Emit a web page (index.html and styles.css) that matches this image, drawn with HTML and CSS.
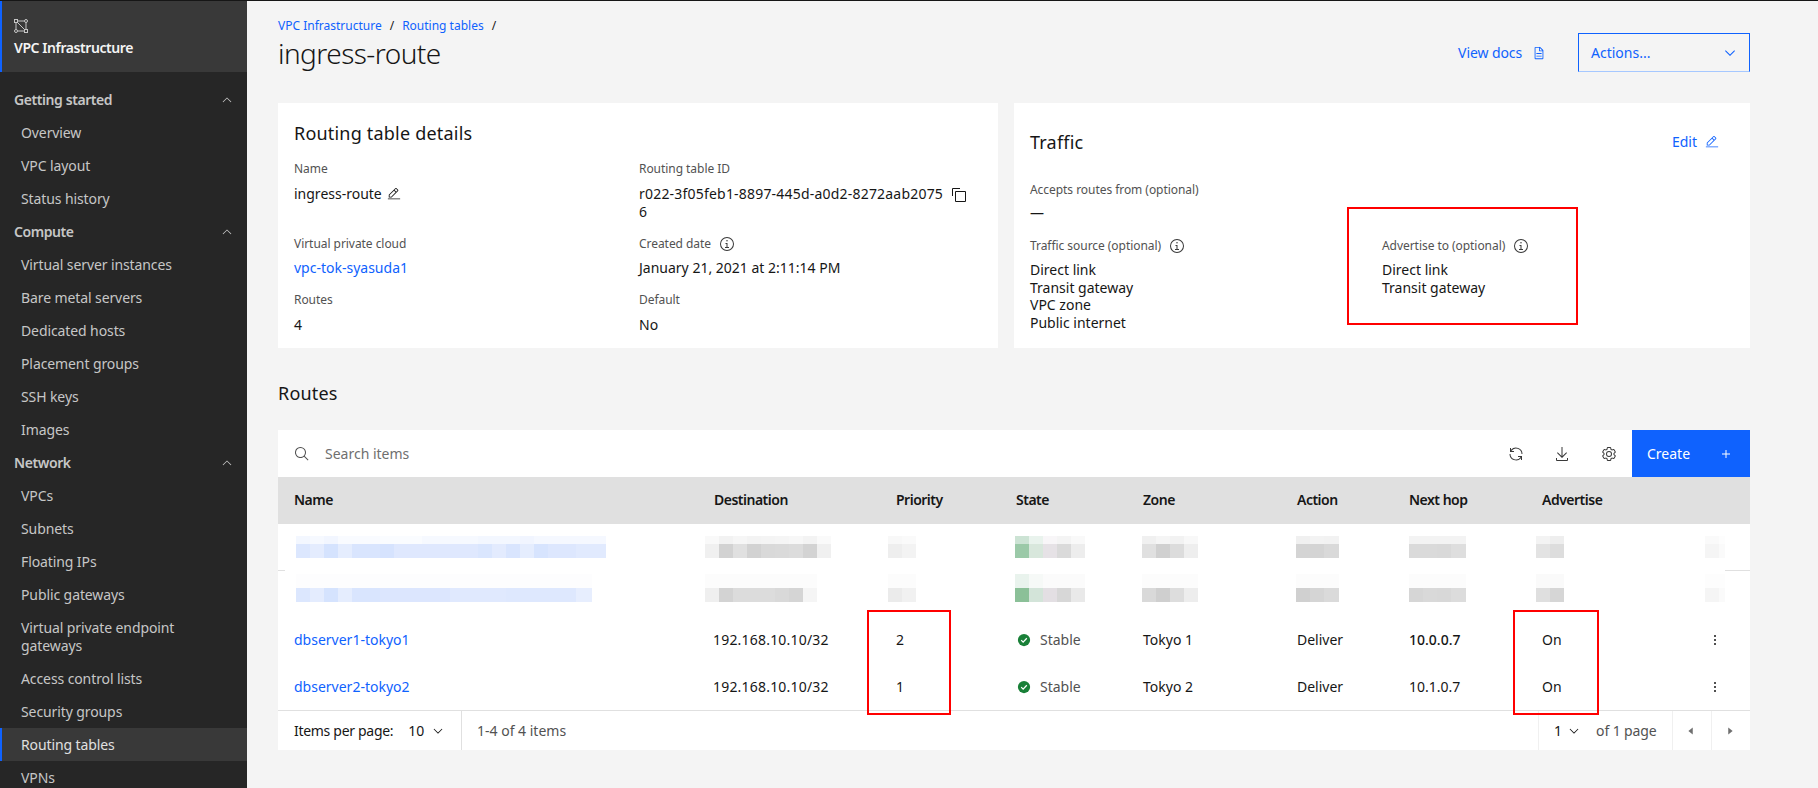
FILE: index.html
```html
<!DOCTYPE html>
<html lang="en">
<head>
<meta charset="utf-8">
<title>ingress-route</title>
<link rel="stylesheet" href="styles.css">
</head>
<body>
<svg class="defs" width="0" height="0" aria-hidden="true">
  <symbol id="i-down" viewBox="0 0 32 32"><path d="M16 22L6 12l1.4-1.4 8.6 8.6 8.6-8.6L26 12z"/></symbol>
  <symbol id="i-up" viewBox="0 0 32 32"><path d="M16 10l10 10-1.4 1.4L16 12.8l-8.6 8.6L6 20z"/></symbol>
  <symbol id="i-search" viewBox="0 0 32 32"><path d="M29 27.586l-7.552-7.552a11.018 11.018 0 1 0-1.414 1.414L27.586 29zM4 13a9 9 0 1 1 9 9 9.01 9.01 0 0 1-9-9z"/></symbol>
  <symbol id="i-edit" viewBox="0 0 32 32"><path d="M2 26h28v2H2zM25.4 9c.8-.8.8-2 0-2.8l-3.6-3.6c-.8-.8-2-.8-2.8 0l-15 15V24h6.4l15-15zm-5-5L24 7.6l-3 3L17.4 7l3-3zM6 22v-3.6l10-10l3.6 3.6l-10 10H6z"/></symbol>
  <symbol id="i-info" viewBox="0 0 32 32"><path d="M17 22v-8h-4v2h2v6h-3v2h8v-2zM16 8a1.5 1.5 0 1 0 1.5 1.5A1.5 1.5 0 0 0 16 8z"/><path d="M16 30a14 14 0 1 1 14-14 14 14 0 0 1-14 14zm0-26a12 12 0 1 0 12 12A12 12 0 0 0 16 4z"/></symbol>
  <symbol id="i-copy" viewBox="0 0 32 32"><path d="M28 10v18H10V10h18m0-2H10a2 2 0 0 0-2 2v18a2 2 0 0 0 2 2h18a2 2 0 0 0 2-2V10a2 2 0 0 0-2-2z"/><path d="M4 18H2V4a2 2 0 0 1 2-2h14v2H4z"/></symbol>
  <symbol id="i-download" viewBox="0 0 32 32"><path d="M26 24v4H6v-4H4v4a2 2 0 0 0 2 2h20a2 2 0 0 0 2-2v-4zM26 14l-1.41-1.41L17 20.17V2h-2v18.17l-7.59-7.58L6 14l10 10 10-10z"/></symbol>
  <symbol id="i-gear" viewBox="0 0 32 32"><path d="M27 16.76V16v-.77l1.92-1.68A2 2 0 0 0 29.3 11l-2.36-4a2 2 0 0 0-1.73-1 2 2 0 0 0-.64.1l-2.43.82a11.35 11.35 0 0 0-1.31-.75l-.51-2.52a2 2 0 0 0-2-1.61h-4.68a2 2 0 0 0-2 1.61l-.51 2.52a11.48 11.48 0 0 0-1.32.75l-2.38-.86A2 2 0 0 0 6.79 6a2 2 0 0 0-1.73 1L2.7 11a2 2 0 0 0 .41 2.51L5 15.24v1.53l-1.89 1.68A2 2 0 0 0 2.7 21l2.36 4a2 2 0 0 0 1.73 1 2 2 0 0 0 .64-.1l2.43-.82a11.35 11.35 0 0 0 1.31.75l.51 2.52a2 2 0 0 0 2 1.61h4.72a2 2 0 0 0 2-1.61l.51-2.52a11.48 11.48 0 0 0 1.32-.75l2.42.82a2 2 0 0 0 .64.1 2 2 0 0 0 1.73-1l2.28-4a2 2 0 0 0-.41-2.51zM25.21 24l-3.43-1.16a8.86 8.86 0 0 1-2.71 1.57L18.36 28h-4.72l-.71-3.55a9.36 9.36 0 0 1-2.7-1.57L6.79 24l-2.36-4 2.72-2.4a8.9 8.9 0 0 1 0-3.13L4.43 12l2.36-4 3.43 1.16a8.86 8.86 0 0 1 2.71-1.57L13.64 4h4.72l.71 3.55a9.36 9.36 0 0 1 2.7 1.57L25.21 8l2.36 4-2.72 2.4a8.9 8.9 0 0 1 0 3.13L27.57 20z"/><path d="M16 22a6 6 0 1 1 6-6 5.94 5.94 0 0 1-6 6zm0-10a3.91 3.91 0 0 0-4 4 3.91 3.91 0 0 0 4 4 3.91 3.91 0 0 0 4-4 3.91 3.91 0 0 0-4-4z"/></symbol>
  <symbol id="i-renew" viewBox="0 0 32 32"><path d="M12 10H6.78A11 11 0 0 1 27 16h2A13 13 0 0 0 6 7.68V4H4v8h8zM20 22h5.22A11 11 0 0 1 5 16H3a13 13 0 0 0 23 8.32V28h2v-8h-8z"/></symbol>
  <symbol id="i-add" viewBox="0 0 32 32"><path d="M17 15V8h-2v7H8v2h7v7h2v-7h7v-2h-7z"/></symbol>
  <symbol id="i-kebab" viewBox="0 0 32 32"><circle cx="16" cy="8" r="2"/><circle cx="16" cy="16" r="2"/><circle cx="16" cy="24" r="2"/></symbol>
  <symbol id="i-doc" viewBox="0 0 32 32"><path d="M25.7 9.3l-7-7A.908.908 0 0 0 18 2H8a2.006 2.006 0 0 0-2 2v24a2.006 2.006 0 0 0 2 2h16a2.006 2.006 0 0 0 2-2V10a.908.908 0 0 0-.3-.7zM18 4.4l5.6 5.6H18zM24 28H8V4h8v6a2.006 2.006 0 0 0 2 2h6z"/><path d="M10 22h12v2H10zM10 16h12v2H10z"/></symbol>
  <symbol id="i-left" viewBox="0 0 32 32"><path d="M20 24l-10-8 10-8z"/></symbol>
  <symbol id="i-right" viewBox="0 0 32 32"><path d="M12 8l10 8-10 8z"/></symbol>
</svg>

<div class="app">
  <nav class="side">
    <div class="side-head">
      <svg class="vpc-icon" viewBox="0 0 14 14" fill="none" stroke="currentColor" stroke-width="1">
        <rect x="0.5" y="0.5" width="3" height="3"/>
        <circle cx="12" cy="2" r="1.5"/>
        <circle cx="2" cy="12" r="1.5"/>
        <rect x="10.5" y="10.5" width="3" height="3"/>
        <path d="M3.5 2h7M2 3.5v7M3.5 12h7M12 3.5v7M3.5 3.5l7 7"/>
      </svg>
      <div class="side-title">VPC Infrastructure</div>
    </div>
    <div class="nav">
      <div class="nav-group">Getting started<svg class="ic nav-chev"><use href="#i-up"/></svg></div>
      <a class="nav-item">Overview</a>
      <a class="nav-item">VPC layout</a>
      <a class="nav-item">Status history</a>
      <div class="nav-group">Compute<svg class="ic nav-chev"><use href="#i-up"/></svg></div>
      <a class="nav-item">Virtual server instances</a>
      <a class="nav-item">Bare metal servers</a>
      <a class="nav-item">Dedicated hosts</a>
      <a class="nav-item">Placement groups</a>
      <a class="nav-item">SSH keys</a>
      <a class="nav-item">Images</a>
      <div class="nav-group">Network<svg class="ic nav-chev"><use href="#i-up"/></svg></div>
      <a class="nav-item">VPCs</a>
      <a class="nav-item">Subnets</a>
      <a class="nav-item">Floating IPs</a>
      <a class="nav-item">Public gateways</a>
      <a class="nav-item">Virtual private endpoint<br>gateways</a>
      <a class="nav-item">Access control lists</a>
      <a class="nav-item">Security groups</a>
      <a class="nav-item is-active">Routing tables</a>
      <a class="nav-item">VPNs</a>
    </div>
  </nav>

  <main class="main">
    <header class="page-head">
      <div class="page-titles">
        <div class="crumbs"><a class="link">VPC Infrastructure</a><span class="sep">/</span><a class="link">Routing tables</a><span class="sep">/</span></div>
        <h1 class="page-title">ingress-route</h1>
      </div>
      <div class="page-actions">
        <a class="link docs">View docs<svg class="ic"><use href="#i-doc"/></svg></a>
        <div class="actions-select">Actions...<svg class="ic"><use href="#i-down"/></svg></div>
      </div>
    </header>

    <section class="cards">
      <div class="card details">
        <h2 class="card-title">Routing table details</h2>
        <div class="details-grid">
          <div class="field">
            <div class="label">Name</div>
            <div class="value">ingress-route<svg class="ic ic-after"><use href="#i-edit"/></svg></div>
          </div>
          <div class="field">
            <div class="label">Routing table ID</div>
            <div class="value id-value"><span>r022-3f05feb1-8897-445d-a0d2-8272aab2075<br>6</span><svg class="ic copy"><use href="#i-copy"/></svg></div>
          </div>
          <div class="field">
            <div class="label">Virtual private cloud</div>
            <div class="value"><a class="link">vpc-tok-syasuda1</a></div>
          </div>
          <div class="field">
            <div class="label">Created date<svg class="ic ic-label"><use href="#i-info"/></svg></div>
            <div class="value">January 21, 2021 at 2:11:14 PM</div>
          </div>
          <div class="field">
            <div class="label">Routes</div>
            <div class="value">4</div>
          </div>
          <div class="field">
            <div class="label">Default</div>
            <div class="value">No</div>
          </div>
        </div>
      </div>

      <div class="card traffic">
        <div class="traffic-head">
          <h2 class="card-title">Traffic</h2>
          <a class="link edit">Edit<svg class="ic"><use href="#i-edit"/></svg></a>
        </div>
        <div class="field accepts">
          <div class="label">Accepts routes from (optional)</div>
          <div class="value">—</div>
        </div>
        <div class="traffic-grid">
          <div class="field">
            <div class="label">Traffic source (optional)<svg class="ic ic-label"><use href="#i-info"/></svg></div>
            <div class="value list">Direct link<br>Transit gateway<br>VPC zone<br>Public internet</div>
          </div>
          <div class="field">
            <div class="label">Advertise to (optional)<svg class="ic ic-label"><use href="#i-info"/></svg></div>
            <div class="value list">Direct link<br>Transit gateway</div>
          </div>
        </div>
        <div class="mark mark-advertise"></div>
      </div>
    </section>

    <h2 class="section-title">Routes</h2>

    <section class="table">
      <div class="toolbar">
        <svg class="ic search-ic"><use href="#i-search"/></svg>
        <span class="search-text">Search items</span>
        <span class="tool"><svg class="ic"><use href="#i-renew"/></svg></span>
        <span class="tool"><svg class="ic"><use href="#i-download"/></svg></span>
        <span class="tool"><svg class="ic"><use href="#i-gear"/></svg></span>
        <span class="create">Create<svg class="ic"><use href="#i-add"/></svg></span>
      </div>

      <div class="row row-head">
        <div>Name</div><div>Destination</div><div>Priority</div><div>State</div><div>Zone</div><div>Action</div><div>Next hop</div><div>Advertise</div><div></div>
      </div>

      <div class="row row-blur row-blur-1">
        <div><i class="mos m-name-1"></i></div>
        <div><i class="mos m-dest-1"></i></div>
        <div><i class="mos m-prio-1"></i></div>
        <div><i class="mos m-state-1"></i></div>
        <div><i class="mos m-zone-1"></i></div>
        <div><i class="mos m-act-1"></i></div>
        <div><i class="mos m-hop-1"></i></div>
        <div><i class="mos m-adv-1"></i></div>
        <div><i class="mos m-keb-1"></i></div>
      </div>
      <div class="row row-blur row-blur-2">
        <div><i class="mos m-name-2"></i></div>
        <div><i class="mos m-dest-2"></i></div>
        <div><i class="mos m-prio-2"></i></div>
        <div><i class="mos m-state-2"></i></div>
        <div><i class="mos m-zone-2"></i></div>
        <div><i class="mos m-act-2"></i></div>
        <div><i class="mos m-hop-2"></i></div>
        <div><i class="mos m-adv-2"></i></div>
        <div><i class="mos m-keb-2"></i></div>
      </div>

      <div class="row">
        <div><a class="link">dbserver1-tokyo1</a></div>
        <div class="num">192.168.10.10/32</div>
        <div>2</div>
        <div class="state"><svg class="ok" viewBox="0 0 16 16"><circle cx="8" cy="8" r="7"/><path d="M4.8 8.2l2.2 2.2 4.2-4.4"/></svg>Stable</div>
        <div>Tokyo 1</div>
        <div>Deliver</div>
        <div class="strong">10.0.0.7</div>
        <div>On</div>
        <div class="kebab"><svg class="ic"><use href="#i-kebab"/></svg></div>
      </div>
      <div class="row">
        <div><a class="link">dbserver2-tokyo2</a></div>
        <div class="num">192.168.10.10/32</div>
        <div>1</div>
        <div class="state"><svg class="ok" viewBox="0 0 16 16"><circle cx="8" cy="8" r="7"/><path d="M4.8 8.2l2.2 2.2 4.2-4.4"/></svg>Stable</div>
        <div>Tokyo 2</div>
        <div>Deliver</div>
        <div>10.1.0.7</div>
        <div>On</div>
        <div class="kebab"><svg class="ic"><use href="#i-kebab"/></svg></div>
      </div>

      <footer class="pager">
        <div class="pager-size"><span class="pager-label">Items per page:</span><span class="pager-num">10</span><svg class="ic"><use href="#i-down"/></svg></div>
        <div class="pager-count">1-4 of 4 items</div>
        <div class="pager-page"><span>1</span><svg class="ic"><use href="#i-down"/></svg><span class="pager-of">of 1 page</span></div>
        <div class="pager-btn"><svg class="ic"><use href="#i-left"/></svg></div>
        <div class="pager-btn"><svg class="ic"><use href="#i-right"/></svg></div>
      </footer>

      <div class="mark mark-priority"></div>
      <div class="mark mark-on"></div>
    </section>
  </main>
</div>
</body>
</html>
```
FILE: styles.css
```css
* { box-sizing: border-box; }
html, body { margin: 0; padding: 0; height: 100%; overflow: hidden; }
body {
  font-family: "Noto Sans", "Liberation Sans", sans-serif;
  font-size: 14px;
  line-height: 18px;
  color: #161616;
  background: #f4f4f4;
}
.defs { position: absolute; }
h1, h2 { margin: 0; font-weight: 400; }
a { text-decoration: none; }
.link { color: #0f62fe; }
.ic { width: 16px; height: 16px; fill: currentColor; flex: none; }

.app { display: flex; height: 788px; border-top: 1px solid #161616; }

/* Sidebar */
.side { width: 247px; flex: none; background: #262626; color: #c6c6c6; overflow: hidden; }
.side-head {
  height: 71px;
  padding: 18px 12px 0;
  background: #393939;
  border-left: 2px solid #0f62fe;
  color: #f4f4f4;
}
.vpc-icon { display: block; width: 14px; height: 14px; color: #c6c6c6; }
.side-title { margin-top: 6px; font-weight: 600; letter-spacing: -0.42px; }
.nav { padding-top: 11px; }
.nav-group {
  display: flex;
  align-items: center;
  justify-content: space-between;
  height: 33px;
  padding: 0 13px 0 14px;
  font-weight: 600;
  letter-spacing: -0.42px;
}
.nav-chev { width: 14px; height: 14px; }
.nav-item { display: block; padding: 7.5px 21px; letter-spacing: -0.1px; }
.nav-item.is-active {
  background: #393939;
  box-shadow: inset 2px 0 0 #0f62fe;
  color: #e0e0e0;
}

/* Main */
.main { flex: 1; min-width: 0; padding: 0 68px 0 31px; position: relative; }
.page-head { display: flex; justify-content: space-between; align-items: flex-start; height: 102px; }
.page-titles { padding-top: 17px; }
.crumbs { font-size: 12px; line-height: 16px; display: flex; }
.sep { margin: 0 8px; color: #161616; }
.page-title { font-size: 28px; line-height: 36px; font-weight: 300; margin-top: 1px; letter-spacing: -0.55px; }
.page-actions { display: flex; align-items: center; margin-top: 32px; }
.docs { display: flex; align-items: center; gap: 10px; margin-right: 32px; letter-spacing: -0.1px; }
.docs .ic { width: 14px; height: 16px; }
.actions-select {
  width: 172px;
  height: 39px;
  display: flex;
  align-items: center;
  justify-content: space-between;
  padding: 0 11px 0 12px;
  border: 1px solid #0f62fe;
  border-bottom-color: #a6c8ff;
  color: #0f62fe;
}

/* Cards */
.cards { display: grid; grid-template-columns: 720px 736px; gap: 16px; }
.card { background: #fff; position: relative; }
.card-title { font-size: 18px; line-height: 24px; letter-spacing: 0.2px; }
.details { height: 245px; padding: 18px 16px 0; }
.details-grid { display: grid; grid-template-columns: 345px 1fr; row-gap: 15px; margin-top: 16px; }
.label { font-size: 12px; line-height: 16px; color: #525252; display: flex; align-items: center; letter-spacing: -0.05px; }
.value { margin-top: 7.5px; display: flex; align-items: center; }
.ic-after { margin-left: 5px; width: 14px; height: 14px; }
.ic-label { margin-left: 8px; color: #393939; }
.id-value { align-items: flex-start; letter-spacing: 0.2px; }
.copy { margin-left: 8px; margin-top: 2px; }

.traffic { height: 245px; padding: 27px 31px 0 16px; }
.traffic-head { display: flex; justify-content: space-between; align-items: center; }
.edit { display: flex; align-items: center; gap: 8px; }
.edit .ic { width: 14px; height: 14px; }
.accepts { margin-top: 28px; }
.accepts .value { margin-top: 6px; }
.traffic-grid { display: grid; grid-template-columns: 352px 1fr; margin-top: 16px; }
.list { display: block; line-height: 17.5px; margin-top: 7px; }

.mark { position: absolute; border: 2px solid #f00; pointer-events: none; }
.mark-advertise { left: 333px; top: 104px; width: 231px; height: 118px; }
.mark-priority { left: 589px; top: 180px; width: 84px; height: 105px; }
.mark-on { left: 1235px; top: 180px; width: 86px; height: 105px; }

.section-title { font-size: 18px; line-height: 24px; margin: 33px 0 25px; letter-spacing: 0.2px; }

/* Table */
.table { position: relative; background: #fff; }
.toolbar { display: flex; align-items: center; height: 47px; padding-left: 16px; }
.search-ic { color: #525252; }
.search-text { flex: 1; margin-left: 15px; color: #6f6f6f; }
.tool { width: 46.5px; display: flex; justify-content: center; color: #393939; }
.create {
  width: 118px;
  height: 47px;
  padding: 0 16px 0 15px;
  display: flex;
  align-items: center;
  justify-content: space-between;
  background: #0f62fe;
  color: #fff;
}
.row {
  display: grid;
  grid-template-columns: 436px 182px 120px 127px 154px 112px 133px 150px 58px;
  align-items: center;
  height: 46.5px;
}
.row > :first-child { padding-left: 16px; }
.row-head { height: 47px; padding-bottom: 2px; background: #e0e0e0; font-weight: 600; letter-spacing: -0.5px; }
.num { letter-spacing: 0.2px; margin-left: -1px; }
.state { display: flex; align-items: center; gap: 9px; margin-left: 1px; color: #525252; }
.ok { width: 14px; height: 14px; }
.ok circle { fill: #198038; }
.ok path { fill: none; stroke: #fff; stroke-width: 1.4; }
.strong { font-weight: 500; }
.kebab { padding-left: 15px; display: flex; }

.row-blur { align-items: start; position: relative; }
.row-blur-1 { padding-top: 12px; }
.row-blur-2 { padding-top: 3px; }
.row-blur-1::before, .row-blur-1::after {
  content: "";
  position: absolute;
  bottom: 0;
  height: 1px;
  background: #e0e0e0;
}
.row-blur-1::before { left: 0; width: 7px; }
.row-blur-1::after { right: 0; width: 25px; }

.mos {
  display: block;
  background-repeat: no-repeat;
  background-position: 0 0, 0 100%;
}
.row-blur-1 .mos { height: 22px; background-size: 100% 8px, 100% 14px; }
.row-blur-2 .mos { height: 28px; background-size: 100% 14px, 100% 14px; }

.m-name-1 {
  width: 310px; margin-left: 2px;
  background-image:
    linear-gradient(90deg, #f3f7ff 0 14px, #f6f9ff 14px 28px, #f2f6ff 28px 42px, #f9fbff 42px 84px, #fafcff 84px 126px, #f6f9ff 126px 182px, #f3f7ff 182px 224px, #f1f5ff 224px 238px, #f5f8ff 238px 310px),
    linear-gradient(90deg, #dce7fe 0 14px, #e4ecfe 14px 28px, #d5e3fe 28px 42px, #e5edfe 42px 56px, #d9e5fe 56px 84px, #d6e3fe 84px 98px, #dfe8fe 98px 182px, #dae6fe 182px 196px, #e3ebfe 196px 210px, #d9e5fe 210px 224px, #e5edfe 224px 238px, #d7e4fe 238px 252px, #dde7fe 252px 280px, #e1eafe 280px 310px);
}
.m-name-2 {
  width: 296px; margin-left: 2px;
  background-image:
    linear-gradient(90deg, #fdfdfe 0 296px),
    linear-gradient(90deg, #dce7fe 0 14px, #e4ecfe 14px 28px, #d5e3fe 28px 42px, #e5edfe 42px 56px, #d9e5fe 56px 84px, #dce6fe 84px 154px, #e0e9fe 154px 210px, #dee8fe 210px 280px, #e7eefe 280px 296px);
}
.m-dest-1 {
  width: 126px; margin-left: -9px;
  background-image:
    linear-gradient(90deg, #f9f9f9 0 14px, #f2f2f2 14px 28px, #f6f6f6 28px 42px, #f3f3f3 42px 56px, #f4f4f4 56px 70px, #f5f5f5 70px 84px, #f7f7f7 84px 98px, #f3f3f3 98px 112px, #fafafa 112px 126px),
    linear-gradient(90deg, #f0f0f0 0 14px, #d2d2d2 14px 28px, #e0e0e0 28px 42px, #d2d2d2 42px 56px, #d9d9d9 56px 70px, #dadada 70px 84px, #dcdcdc 84px 98px, #d3d3d3 98px 112px, #f0f0f0 112px 126px);
}
.m-dest-2 {
  width: 112px; margin-left: -9px;
  background-image:
    linear-gradient(90deg, #fcfcfc 0 112px),
    linear-gradient(90deg, #efefef 0 14px, #d3d3d3 14px 28px, #dcdcdc 28px 70px, #d9d9d9 70px 84px, #d5d5d5 84px 98px, #f5f5f5 98px 112px);
}
.m-prio-1 {
  width: 28px; margin-left: -8px;
  background-image:
    linear-gradient(90deg, #f8f8f8 0 14px, #fafafa 14px 28px),
    linear-gradient(90deg, #eeeeee 0 14px, #f3f3f3 14px 28px);
}
.m-prio-2 {
  width: 28px; margin-left: -8px;
  background-image:
    linear-gradient(90deg, #fcfcfc 0 28px),
    linear-gradient(90deg, #ebebeb 0 14px, #f1f1f1 14px 28px);
}
.m-state-1 {
  width: 70px; margin-left: -1px;
  background-image:
    linear-gradient(90deg, #cce3d4 0 14px, #e9f3ed 14px 28px, #f8f6f8 28px 42px, #f4f4f4 42px 56px, #f9f9f9 56px 70px),
    linear-gradient(90deg, #9bc9a8 0 14px, #d8e7dc 14px 28px, #e6e2e6 28px 42px, #dadada 42px 56px, #ededed 56px 70px);
}
.m-state-2 {
  width: 70px; margin-left: -1px;
  background-image:
    linear-gradient(90deg, #e9f3ed 0 14px, #f6f9f7 14px 28px, #fbfbfb 28px 70px),
    linear-gradient(90deg, #8bc098 0 14px, #d3e4d9 14px 28px, #e3dfe3 28px 42px, #d7d7d7 42px 56px, #e9e9e9 56px 70px);
}
.m-zone-1 {
  width: 56px; margin-left: -1px;
  background-image:
    linear-gradient(90deg, #f0f0f0 0 14px, #f5f5f5 14px 28px, #f2f2f2 28px 42px, #f8f8f8 42px 56px),
    linear-gradient(90deg, #e0e0e0 0 14px, #d0d0d0 14px 28px, #dcdcdc 28px 42px, #eeeeee 42px 56px);
}
.m-zone-2 {
  width: 56px; margin-left: -1px;
  background-image:
    linear-gradient(90deg, #fcfcfc 0 56px),
    linear-gradient(90deg, #d9d9d9 0 14px, #cfcfcf 14px 28px, #dddddd 28px 42px, #ededed 42px 56px);
}
.m-act-1 {
  width: 43px; margin-left: -1px;
  background-image:
    linear-gradient(90deg, #f0f0f0 0 14px, #f3f3f3 14px 28px, #f2f2f2 28px 43px),
    linear-gradient(90deg, #d4d4d4 0 28px, #d9d9d9 28px 43px);
}
.m-act-2 {
  width: 43px; margin-left: -1px;
  background-image:
    linear-gradient(90deg, #fcfcfc 0 43px),
    linear-gradient(90deg, #d0d0d0 0 14px, #d5d5d5 14px 28px, #dadada 28px 43px);
}
.m-hop-1 {
  width: 57px;
  background-image:
    linear-gradient(90deg, #f3f3f3 0 57px),
    linear-gradient(90deg, #dadada 0 28px, #d9d9d9 28px 42px, #dedede 42px 57px);
}
.m-hop-2 {
  width: 57px;
  background-image:
    linear-gradient(90deg, #fcfcfc 0 57px),
    linear-gradient(90deg, #d6d6d6 0 14px, #d9d9d9 14px 28px, #d8d8d8 28px 42px, #dcdcdc 42px 57px);
}
.m-adv-1 {
  width: 28px; margin-left: -6px;
  background-image:
    linear-gradient(90deg, #f3f3f3 0 14px, #eeeeee 14px 28px),
    linear-gradient(90deg, #e3e3e3 0 14px, #dddddd 14px 28px);
}
.m-adv-2 {
  width: 28px; margin-left: -6px;
  background-image:
    linear-gradient(90deg, #fafafa 0 28px),
    linear-gradient(90deg, #dfdfdf 0 14px, #d6d6d6 14px 28px);
}
.m-keb-1 {
  width: 20px; margin-left: 13px;
  background-image:
    linear-gradient(90deg, #fafafa 0 14px, #fdfdfd 14px 20px),
    linear-gradient(90deg, #f5f5f5 0 14px, #fafafa 14px 20px);
}
.m-keb-2 {
  width: 20px; margin-left: 13px;
  background-image:
    linear-gradient(90deg, #fdfdfd 0 20px),
    linear-gradient(90deg, #f5f5f5 0 14px, #fafafa 14px 20px);
}

/* Pagination */
.pager {
  display: flex;
  align-items: stretch;
  height: 40px;
  border-top: 1px solid #e0e0e0;
}
.pager > div { display: flex; align-items: center; }
.pager .ic { width: 14px; height: 14px; }
.pager-size { width: 184px; padding-left: 16px; border-right: 1px solid #e0e0e0; }
.pager-label { letter-spacing: -0.3px; }
.pager-num { margin: 0 7px 0 15px; }
.pager-count { flex: 1; padding-left: 15px; color: #525252; }
.pager-page { width: 134px; padding-left: 15px; border-left: 1px solid #f0f0f0; }
.pager-page .ic { margin-left: 5px; }
.pager-of { margin-left: 15px; letter-spacing: -0.1px; color: #525252; }
.pager-btn { width: 39px; padding-right: 2px; justify-content: center; border-left: 1px solid #f0f0f0; color: #6f6f6f; }
```
